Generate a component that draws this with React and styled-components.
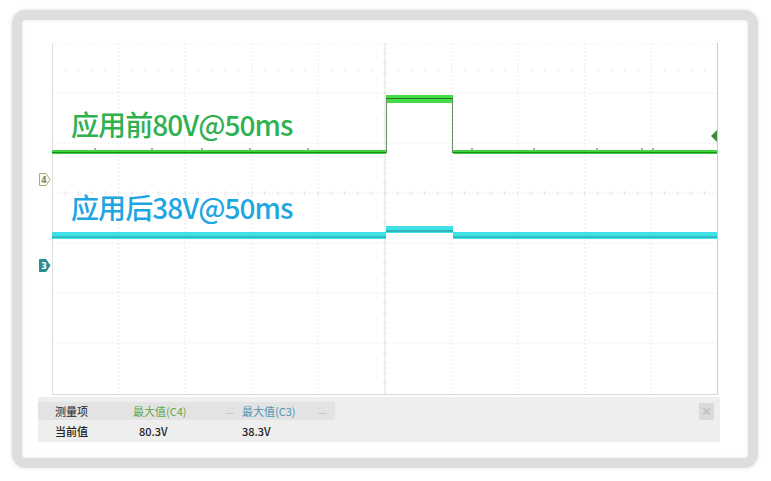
import styled, {createGlobalStyle} from 'styled-components'

const GlobalStyle=createGlobalStyle`
html,body{margin:0;padding:0;background:#fff;}
body{font-family:"Noto Sans CJK SC","Noto Sans",sans-serif;}
`
const Page=styled.div`
width:771px;
height:481px;
padding:10px 0 0 12px;
box-sizing:border-box;
background:#fff;
`
const Frame=styled.div`
width:746px;
height:458px;
box-sizing:border-box;
border:10px solid #dedede;
border-radius:14px;
box-shadow:0 0 4px rgba(0,0,0,0.12),inset 0 0 3px rgba(0,0,0,0.1);
background:#fff;
display:flex;
flex-direction:column;
`
const ScopeRow=styled.div`
display:flex;
padding-top:23px;
`
const Gutter=styled.div`
width:30px;
position:relative;
`
const MarkerBox=styled.svg`
position:absolute;
left:17px;
top:${p=>p.top}px;
display:block;
`
const Plot=styled.div`
position:relative;
width:666px;
height:352px;
`
const Label=styled.div`
position:absolute;
left:19px;
top:${p=>p.top}px;
font-family:"Noto Sans CJK SC","Noto Sans",sans-serif;
font-size:28px;
font-weight:500;
line-height:1;
letter-spacing:-0.9px;
color:${p=>p.color};
white-space:nowrap;
`
const Panel=styled.div`
margin:2px 0 0 16px;
width:682px;
height:45px;
background:#eeeeee;
position:relative;
display:grid;
grid-template-columns:95px 109px 93px 1fr;
grid-template-rows:18px 22px;
padding-top:5px;
box-sizing:border-box;
font-family:"Noto Sans CJK SC","Liberation Sans",sans-serif;
font-size:11px;
color:#333;
`
const Cell=styled.div`
display:flex;
align-items:center;
justify-content:space-between;
padding-left:${p=>p.pad||0}px;
padding-right:8px;
background:${p=>p.head?'#e3e3e3':'transparent'};
color:${p=>p.color||'#222'};
font-weight:${p=>p.head?400:500};
white-space:nowrap;
`
const Dash=styled.span`
color:#c2c2c2;
font-size:10px;
`
const CloseBtn=styled.div`
position:absolute;
right:6px;
top:6px;
width:15px;
height:17px;
background:#dadada;
color:#bdbdbd;
font:13px/17px "DejaVu Sans",sans-serif;
text-align:center;
`

const Marker=({top,filled,n})=>(
  <MarkerBox top={top} width="12" height="13" viewBox="0 0 12 13">
    <polygon points="0.5,0.5 7,0.5 11,6.5 7,12.5 0.5,12.5"
      fill={filled?'#2f8c8f':'#fbfbf4'} stroke={filled?'#2f8c8f':'#a3ad85'} strokeWidth="1"/>
    <text x="5" y="9.6" textAnchor="middle" fontSize="8" fontWeight="bold"
      fontFamily="DejaVu Sans, sans-serif" fill={filled?'#ffffff':'#7d8a5c'}>{n}</text>
  </MarkerBox>
)

const W=666,H=352,DX=W/10

const Grid=()=>{
  const v=[],h=[],ticks=[]
  for(let i=1;i<10;i++)v.push(<line key={'v'+i} x1={i*DX} y1={0} x2={i*DX} y2={H} stroke="#ececec" strokeDasharray="2 2"/>)
  for(let j=1;j<7;j++)h.push(<line key={'h'+j} x1={0} y1={j*50} x2={W} y2={j*50} stroke="#eeeeee" strokeDasharray="2 2"/>)
  for(let k=0;k<50;k++){
    const x=k*DX/5
    ticks.push(<line key={'t'+k} x1={x} y1={148} x2={x} y2={152} stroke="#e2e2e2"/>)
    ticks.push(<line key={'u'+k} x1={x} y1={25} x2={x} y2={29} stroke="#f0f0f0"/>)
  }
  for(let k=0;k<35;k++){
    const y=k*10
    ticks.push(<line key={'c'+k} x1={5*DX-2} y1={y} x2={5*DX+2} y2={y} stroke="#e0e0e0"/>)
  }
  const gt=[43,100,150,198,256,420,482,545,590,601]
  return(
    <svg width={W} height={H} style={{display:'block'}}>
      {v}{h}{ticks}
      <line x1={0} y1={0} x2={W} y2={0} stroke="#f0f0f0" strokeDasharray="2 1"/>
      <line x1={5*DX} y1={0} x2={5*DX} y2={H} stroke="#e4e4e4"/>
      <line x1={0.5} y1={0} x2={0.5} y2={H} stroke="#e0e0e0"/>
      <line x1={W-0.5} y1={0} x2={W-0.5} y2={H} stroke="#cccccc"/>
      <line x1={0} y1={H-0.5} x2={W} y2={H-0.5} stroke="#d8d8d8"/>
      {/* cyan trace */}
      <rect x={0} y={189} width={334} height={7} fill="#3fe0e6"/>
      <rect x={334} y={183} width={67} height={7} fill="#3fe0e6"/>
      <rect x={401} y={189} width={W-402} height={7} fill="#3fe0e6"/>
      <line x1={0} y1={194} x2={334} y2={194} stroke="#1a9aa0" strokeWidth="1"/>
      <line x1={334} y1={188} x2={401} y2={188} stroke="#1a8a90" strokeWidth="1.2"/>
      <line x1={401} y1={194} x2={W-1} y2={194} stroke="#1a9aa0" strokeWidth="1"/>
      {/* green trace */}
      <rect x={0} y={107} width={334} height={4} fill="#3fd13f"/>
      <rect x={334} y={52} width={67} height={8} fill="#45dd45"/>
      <rect x={401} y={107} width={W-402} height={4} fill="#3fd13f"/>
      <line x1={0} y1={109.5} x2={334} y2={109.5} stroke="#1e8a1e" strokeWidth="1"/>
      <line x1={334} y1={55.5} x2={401} y2={55.5} stroke="#1e7a1e" strokeWidth="1"/>
      <line x1={401} y1={109.5} x2={W-1} y2={109.5} stroke="#1e8a1e" strokeWidth="1"/>
      <line x1={334.5} y1={56} x2={334.5} y2={110} stroke="#6b8f6b" strokeWidth="1"/>
      <line x1={400.5} y1={56} x2={400.5} y2={110} stroke="#6b8f6b" strokeWidth="1"/>
      {gt.map(x=><line key={'g'+x} x1={x} y1={105} x2={x} y2={107} stroke="#3c6a3c"/>)}
      <polygon points={`${W-1},87 ${W-1},99 ${W-7},93`} fill="#3c8a3c"/>
    </svg>
  )
}

const App=()=>{
  return(
    <Page>
      <GlobalStyle/>
      <Frame>
        <ScopeRow>
          <Gutter>
            <Marker top={130} n="4"/>
            <Marker top={216} n="3" filled/>
          </Gutter>
          <Plot>
            <Grid/>
            <Label top={67} color="#2fb150">应用前80V@50ms</Label>
            <Label top={150} color="#1ea6e2">应用后38V@50ms</Label>
          </Plot>
        </ScopeRow>
        <Panel>
          <Cell head pad={17}>测量项</Cell>
          <Cell head color="#5fa84a">最大值(C4)<Dash>—</Dash></Cell>
          <Cell head color="#4f93b3">最大值(C3)<Dash>—</Dash></Cell>
          <Cell/>
          <Cell pad={17}>当前值</Cell>
          <Cell pad={6}>80.3V</Cell>
          <Cell>38.3V</Cell>
          <Cell/>
          <CloseBtn>✕</CloseBtn>
        </Panel>
      </Frame>
    </Page>
  )
}
export default App
